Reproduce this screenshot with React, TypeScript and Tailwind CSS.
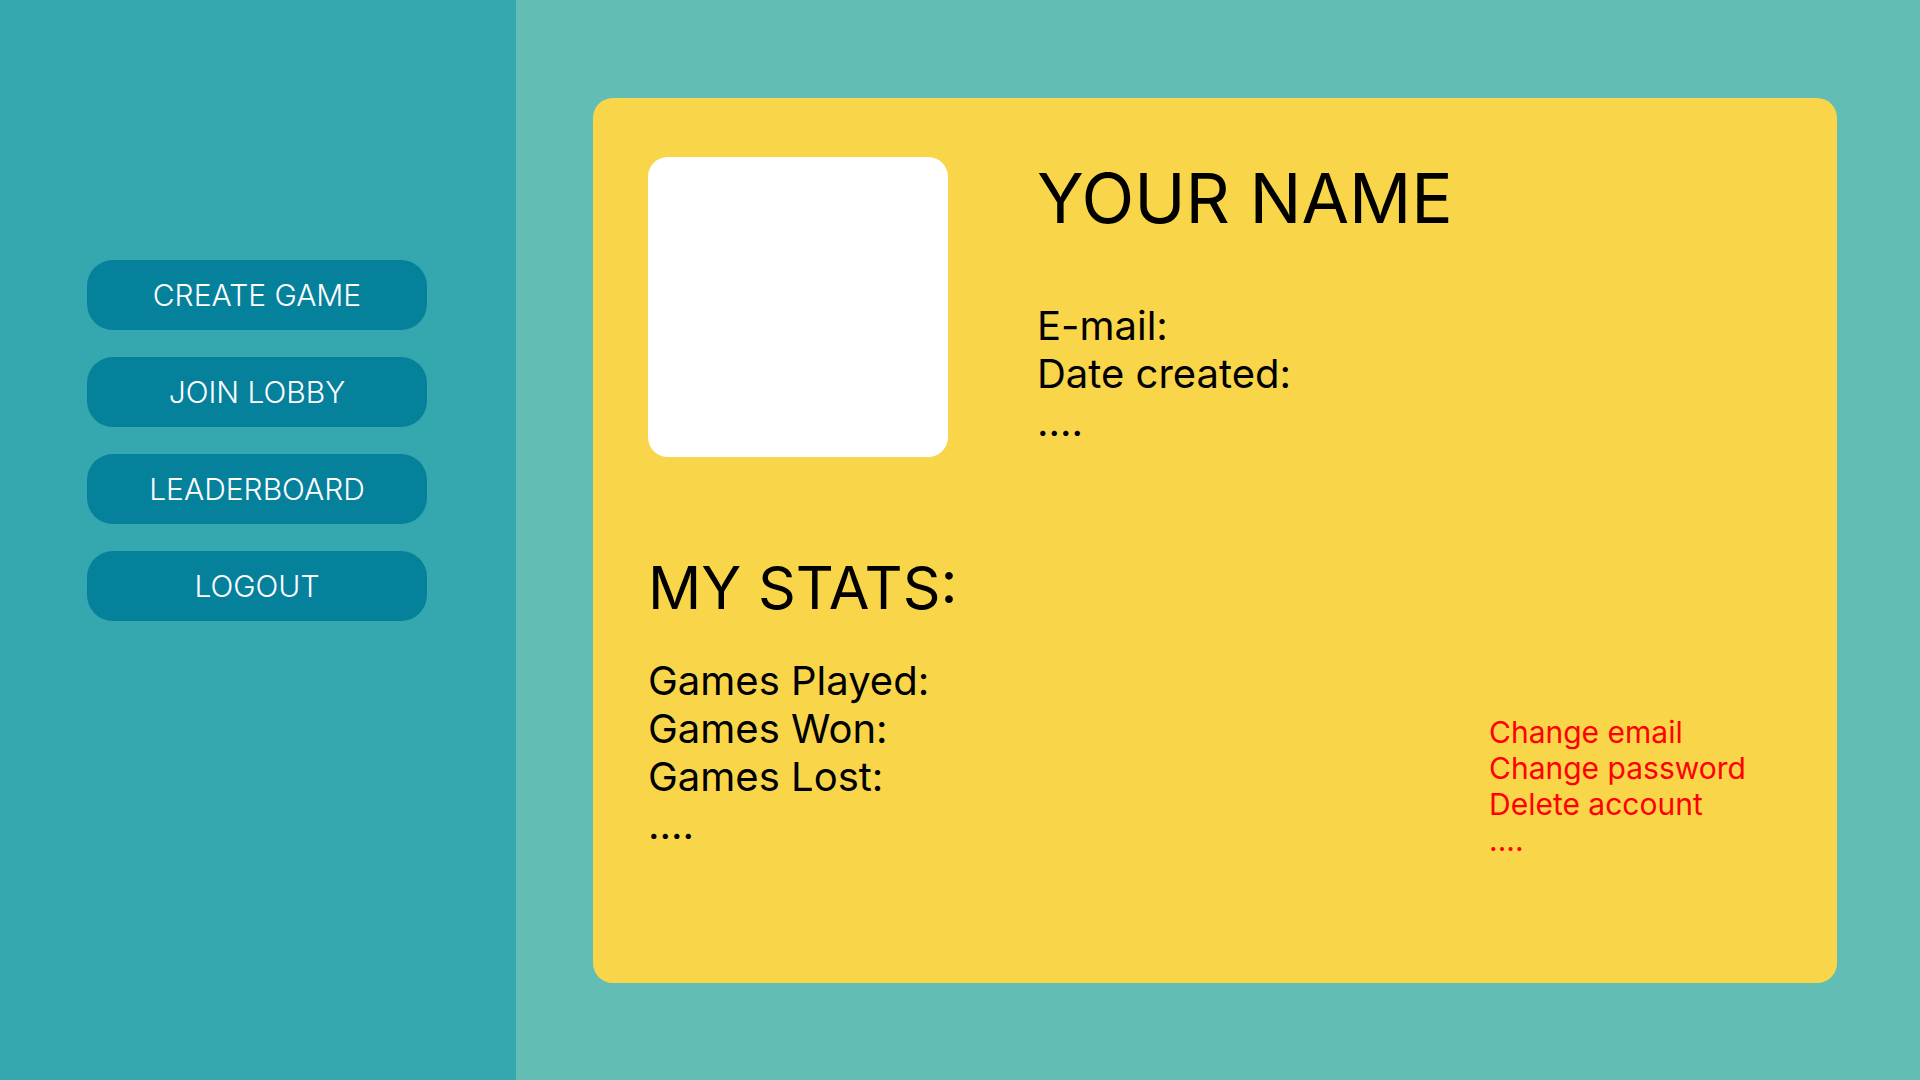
const menu = ["CREATE GAME", "JOIN LOBBY", "LEADERBOARD", "LOGOUT"];

const stats = ["Games Played:", "Games Won:", "Games Lost:", "...."];

const accountLinks = ["Change email", "Change password", "Delete account", "...."];

export default function App() {
  return (
    <div className="flex h-[1080px] w-[1920px] bg-[#62bdb5] font-['Inter',sans-serif] text-black">
      {/* Sidebar */}
      <aside className="flex w-[516px] shrink-0 flex-col gap-[27px] bg-[#35a7ae] pl-[87px] pt-[260px]">
        {menu.map((item) => (
          <button
            key={item}
            className="flex h-[70px] w-[340px] items-center justify-center rounded-[26px] bg-[#06819c] text-[30px] font-light text-white"
          >
            {item}
          </button>
        ))}
      </aside>

      {/* Profile card */}
      <main className="flex-1 pl-[77px] pr-[83px] pt-[98px]">
        <div className="flex h-[885px] flex-col rounded-[20px] bg-[#f9d649] pl-[55px] pt-[59px]">
          {/* Header */}
          <div className="flex">
            <div className="h-[300px] w-[300px] shrink-0 rounded-[20px] bg-white" />
            <div className="ml-[89px] flex flex-col">
              <h1 className="text-[69px] font-normal leading-[82px]">YOUR NAME</h1>
              <div className="mt-[63px] text-[40px] leading-[48px]">
                <p>E-mail:</p>
                <p>Date created:</p>
                <p>....</p>
              </div>
            </div>
          </div>

          {/* Stats */}
          <h2 className="mt-[95px] text-[59px] font-normal leading-[72px]">MY STATS:</h2>
          <div className="mt-[33px] flex">
            <div className="flex-1 text-[40px] leading-[48px]">
              {stats.map((s) => (
                <p key={s}>{s}</p>
              ))}
            </div>
            <div className="mt-[57px] w-[348px] shrink-0 text-[30px] leading-[36px] text-[#ff0000]">
              {accountLinks.map((l) => (
                <p key={l}>{l}</p>
              ))}
            </div>
          </div>
        </div>
      </main>
    </div>
  );
}
